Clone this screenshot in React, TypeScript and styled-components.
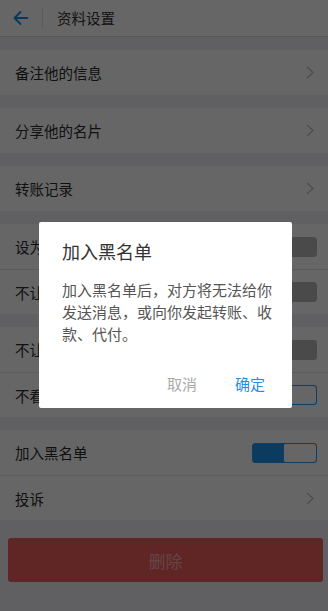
import * as React from 'react';
import styled, { createGlobalStyle } from 'styled-components';

const GlobalStyle = createGlobalStyle`
  html, body {
    margin: 0;
    padding: 0;
    background: #efeff4;
  }
  body {
    font-family: 'Noto Sans CJK SC', 'Noto Sans', sans-serif;
    color: #333333;
  }
`;

type Item = {
  label: string;
  kind: 'link' | 'switch';
  on?: boolean;
};

const groups: Item[][] = [
  [{ label: '备注他的信息', kind: 'link' }],
  [{ label: '分享他的名片', kind: 'link' }],
  [{ label: '转账记录', kind: 'link' }],
  [
    { label: '设为星标朋友', kind: 'switch', on: false },
    { label: '不让他看我', kind: 'switch', on: false },
  ],
  [
    { label: '不让他看我的生活圈', kind: 'switch', on: false },
    { label: '不看他的生活圈', kind: 'switch', on: true },
  ],
  [
    { label: '加入黑名单', kind: 'switch', on: true },
    { label: '投诉', kind: 'link' },
  ],
];

const Page = styled.div`
  width: 328px;
  min-height: 611px;
  background: #efeff4;
  display: flex;
  flex-direction: column;
`;

const Header = styled.div`
  height: 37px;
  box-sizing: border-box;
  background: #ffffff;
  border-bottom: 1px solid #d9d9d9;
  display: flex;
  align-items: center;
  padding-left: 13px;
`;

const BackButton = styled.div`
  width: 15px;
  height: 14px;
  display: flex;
  align-items: center;
`;

const HeaderDivider = styled.div`
  width: 1px;
  height: 22px;
  background: #e5e5e5;
  margin-left: 14px;
`;

const HeaderTitle = styled.div`
  margin-left: 14px;
  font-size: 14.5px;
  line-height: 20px;
  color: #333333;
`;

const Group = styled.div`
  margin-top: 13px;
  background: #ffffff;
`;

const Row = styled.div<{ $divided: boolean }>`
  height: 45px;
  box-sizing: border-box;
  display: flex;
  align-items: center;
  padding: 0 11px 0 15px;
  border-top: ${p => (p.$divided ? '1px solid #e3e3e3' : 'none')};
`;

const Label = styled.div`
  flex: 1;
  font-size: 14.5px;
  color: #2b2b2b;
  white-space: nowrap;
`;

const Chevron = styled.svg`
  width: 8px;
  height: 13px;
  margin-right: 3px;
`;

const Track = styled.div<{ $on: boolean }>`
  width: 65px;
  height: 20px;
  box-sizing: border-box;
  border-radius: 3px;
  border: 1px solid ${p => (p.$on ? '#2a9af0' : '#b8b8b8')};
  background: ${p => (p.$on ? '#1e95f0' : '#b8b8b8')};
  display: flex;
  justify-content: ${p => (p.$on ? 'flex-end' : 'flex-start')};
  overflow: hidden;
`;

const Knob = styled.div<{ $on: boolean }>`
  width: 33px;
  height: 100%;
  border-radius: 2px;
  background: #ffffff;
  box-sizing: border-box;
  border-left: 1px solid ${p => (p.$on ? '#2a9af0' : '#b8b8b8')};
`;

const DeleteButton = styled.div`
  margin: 18px 5px 0 8px;
  height: 44px;
  border-radius: 3px;
  background: #f05c5c;
  color: rgba(255, 255, 255, 0.5);
  font-size: 17px;
  display: flex;
  align-items: center;
  justify-content: center;
`;

const Mask = styled.div`
  position: fixed;
  inset: 0;
  background: rgba(0, 0, 0, 0.6);
  display: flex;
  align-items: flex-start;
  padding: 222px 0 0 39px;
`;

const Dialog = styled.div`
  width: 253px;
  height: 186px;
  box-sizing: border-box;
  background: #ffffff;
  border-radius: 2px;
  padding: 17px 18px 13px 23px;
  display: flex;
  flex-direction: column;
`;

const DialogTitle = styled.div`
  font-size: 18px;
  line-height: 24px;
  color: #333333;
`;

const DialogBody = styled.div`
  margin-top: 16px;
  font-size: 15px;
  line-height: 22px;
  color: #555555;
`;

const DialogActions = styled.div`
  margin-top: auto;
  display: flex;
  justify-content: flex-end;
  gap: 38px;
  padding-right: 9px;
`;

const DialogAction = styled.div<{ $primary?: boolean }>`
  font-size: 15px;
  line-height: 22px;
  color: ${p => (p.$primary ? '#1e8fe0' : '#aaaaaa')};
`;

function Switch({ on }: { on: boolean }) {
  return (
    <Track $on={on}>
      <Knob $on={on} />
    </Track>
  );
}

export default function App() {
  return (
    <>
      <GlobalStyle />
      <Page>
        <Header>
          <BackButton>
            <svg width="15" height="14" viewBox="0 0 15 14" fill="none">
              <path
                d="M14.5 7H1.5M7.5 1L1.5 7l6 6"
                stroke="#108ee9"
                strokeWidth="1.8"
                strokeLinecap="round"
                strokeLinejoin="round"
              />
            </svg>
          </BackButton>
          <HeaderDivider />
          <HeaderTitle>资料设置</HeaderTitle>
        </Header>
        {groups.map((group, gi) => (
          <Group key={gi}>
            {group.map((item, i) => (
              <Row key={item.label} $divided={i > 0}>
                <Label>{item.label}</Label>
                {item.kind === 'link' ? (
                  <Chevron viewBox="0 0 8 13" fill="none">
                    <path d="M1 1l6 5.5L1 12" stroke="#c2c2c2" strokeWidth="1.3" />
                  </Chevron>
                ) : (
                  <Switch on={!!item.on} />
                )}
              </Row>
            ))}
          </Group>
        ))}
        <DeleteButton>删除</DeleteButton>
      </Page>
      <Mask>
        <Dialog>
          <DialogTitle>加入黑名单</DialogTitle>
          <DialogBody>加入黑名单后，对方将无法给你发送消息，或向你发起转账、收款、代付。</DialogBody>
          <DialogActions>
            <DialogAction>取消</DialogAction>
            <DialogAction $primary>确定</DialogAction>
          </DialogActions>
        </Dialog>
      </Mask>
    </>
  );
}
